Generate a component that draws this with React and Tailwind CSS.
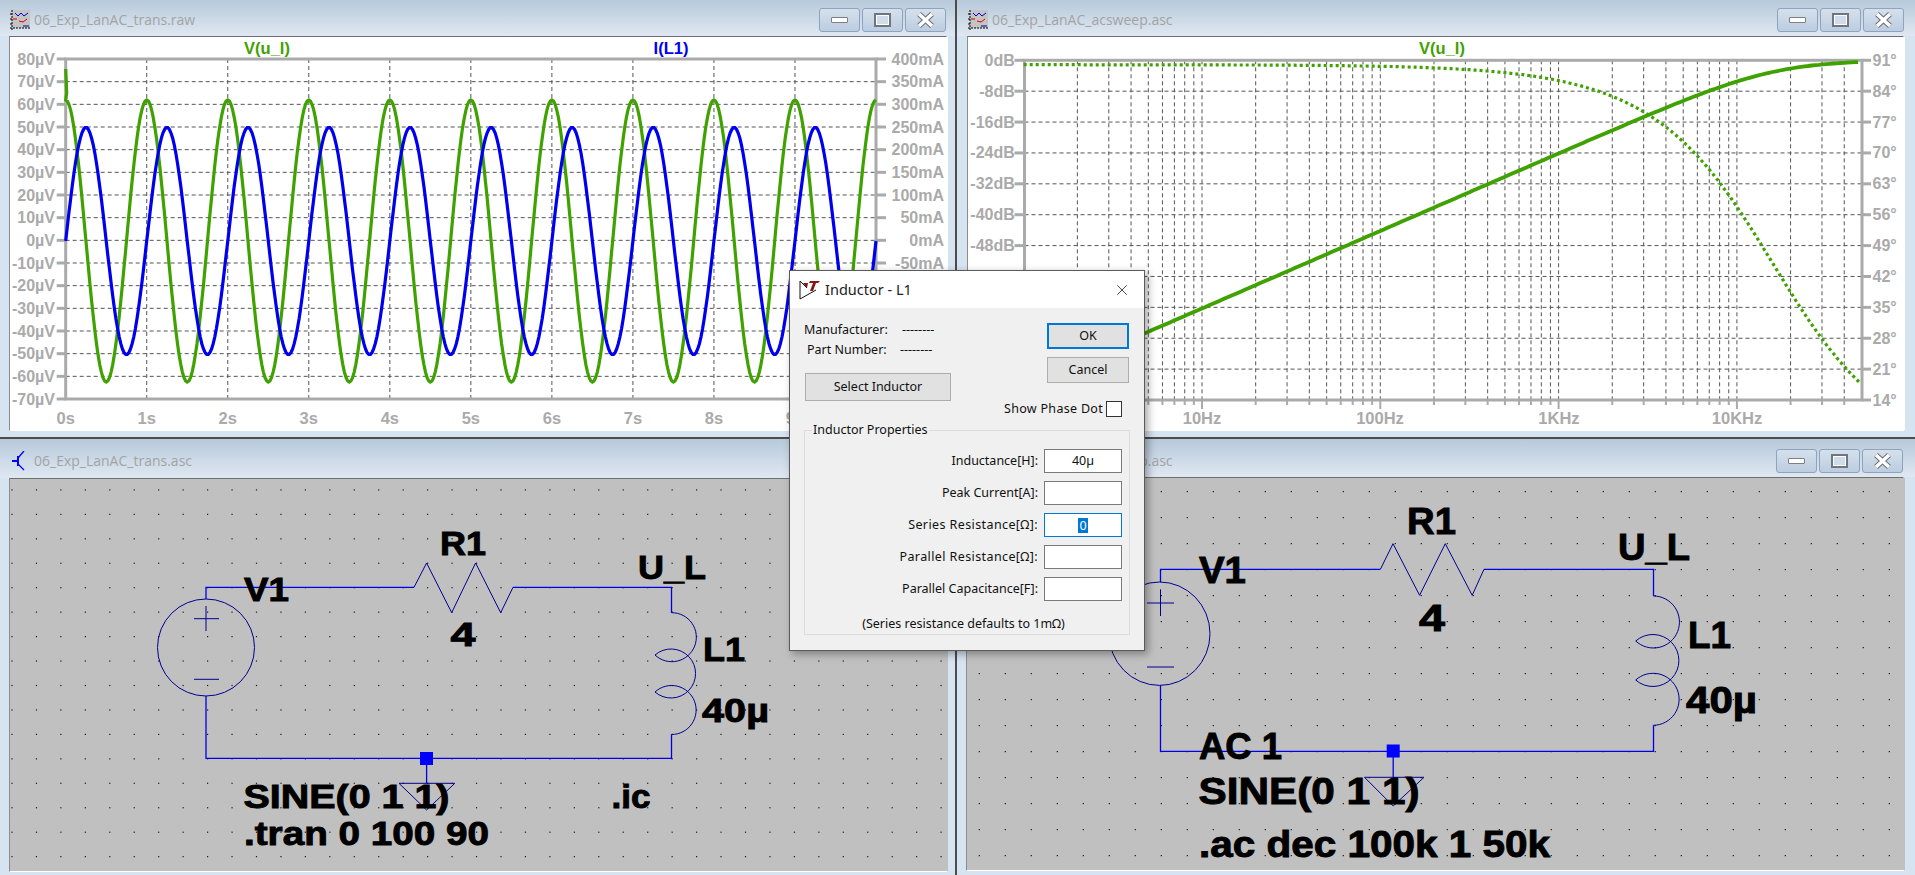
import React from 'react';
import { X } from 'lucide-react';

const GREEN = '#3fa200';
const BLUE = '#0000f0';
const AXIS = '#aaaaaa';
const GRID = '#555555';

function Txt({ x, y, size = 16, anchor = 'start', fill = AXIS, children }) {
  return (
    <text
      x={x}
      y={y}
      textAnchor={anchor}
      fontSize={size}
      fill={fill}
      className="font-['Liberation_Sans'] font-bold"
    >
      {children}
    </text>
  );
}

// schematic text, stretched to the measured width
function Net({ x, y, w, size = 33, children }) {
  return (
    <text
      x={x}
      y={y}
      textLength={w}
      lengthAdjust="spacingAndGlyphs"
      fontSize={size}
      fill="#000"
      stroke="#000"
      strokeWidth="0.9"
      className="font-['Liberation_Sans'] font-bold"
    >
      {children}
    </text>
  );
}

function PlotIcon() {
  return (
    <svg width="20" height="20" viewBox="0 0 20 20" className="shrink-0">
      <rect x="2" y="0" width="18" height="18" fill="#c4c4c4" />
      <path d="M2 0V20M0 4H2M0 9H2M0 14H2M0 18H20" stroke="#000" strokeWidth="1" strokeDasharray="2 1" />
      <path d="M5 3L8 6L11 3L14 6L18 3" stroke="#0000e0" fill="none" strokeWidth="1" />
      <path d="M3 9H7M9 11L13 12L17 9" stroke="#e00000" fill="none" strokeWidth="1" />
      <path d="M13 16H19" stroke="#0000a0" strokeWidth="1" />
    </svg>
  );
}

function SchematicIcon() {
  return (
    <svg width="20" height="20" viewBox="0 0 20 20" className="shrink-0">
      <path d="M2 10H8M8 5V15" stroke="#0000ff" strokeWidth="2" fill="none" />
      <path d="M8 7L14 0M8 13L14 19" stroke="#0000ff" strokeWidth="1.3" fill="none" />
    </svg>
  );
}

function WinButton({ children }) {
  return (
    <div className="w-[41px] h-[24px] flex items-center justify-center rounded-[3px] border border-[#8ea3bf] bg-gradient-to-b from-[#d5e0ec] to-[#bccde0]">
      {children}
    </div>
  );
}

function WinButtons({ className }) {
  return (
    <div className={`flex gap-[2px] ml-auto ${className}`}>
      <WinButton>
        <div className="w-[17px] h-[6px] rounded-[1px] bg-white border border-[#7c7f85]" />
      </WinButton>
      <WinButton>
        <div className="w-[17px] h-[14px] bg-[#cfdcea] border-2 border-[#6f7680] shadow-[inset_0_0_0_1px_white]" />
      </WinButton>
      <WinButton>
        <svg width="19" height="16" viewBox="0 0 19 16">
          <path d="M3 2L16 14M16 2L3 14" stroke="#6b6f76" strokeWidth="5.5" />
          <path d="M3 2L16 14M16 2L3 14" stroke="#ffffff" strokeWidth="3.5" />
        </svg>
      </WinButton>
    </div>
  );
}

function Window({ title, icon, barClass, bodyClass, buttonsClass, frameClass, children }) {
  return (
    <div className={`flex flex-col bg-[#d6e3f0] overflow-hidden ${frameClass}`}>
      <div className={`flex items-center shrink-0 bg-gradient-to-b from-[#b7c9da] to-[#dfe8f2] ${barClass}`}>
        {icon}
        <span className="ml-[4px] text-[14px] text-[#a3a3a3] font-['Open_Sans',sans-serif] leading-none whitespace-nowrap">{title}</span>
        <WinButtons className={buttonsClass} />
      </div>
      <div className={`border-t border-l border-t-[#6e6e6e] border-l-[#8c8c8c] border-r border-b border-r-white border-b-white ${bodyClass}`}>
        {children}
      </div>
    </div>
  );
}

function curve(fn, from, to, step) {
  const pts = [];
  for (let t = from; t <= to + 1e-9; t += step) {
    const [x, y] = fn(t);
    pts.push(`${x.toFixed(1)},${y.toFixed(1)}`);
  }
  return pts.join(' ');
}

function TransPlot() {
  const L = 64.7, R = 875, T = 58, B = 398;
  const dy = (B - T) / 15;
  const dx = (R - L) / 10;
  const rows = Array.from({ length: 16 }, (_, i) => i);
  const cols = Array.from({ length: 11 }, (_, i) => i);
  const green = curve((t) => [L + t * dx, 240 - 141 * Math.cos(2 * Math.PI * t)], 0, 10, 0.02);
  const blue = curve((t) => [L + t * dx, 240 - 113.5 * Math.sin(2 * Math.PI * t)], 0, 10, 0.02);
  return (
    <svg viewBox="9 36 938 393" width="938" height="393" className="block bg-white">
      {rows.slice(1, 15).map((i) => (
        <line key={i} x1={L} x2={R} y1={T + i * dy} y2={T + i * dy} stroke={GRID} strokeDasharray="4 3" />
      ))}
      {cols.slice(1, 10).map((i) => (
        <line key={i} x1={L + i * dx} x2={L + i * dx} y1={T} y2={B} stroke={GRID} strokeDasharray="4 3" />
      ))}
      <rect x={L} y={T} width={R - L} height={B - T} fill="none" stroke={AXIS} strokeWidth="3" />
      {rows.map((i) => (
        <g key={i}>
          <line x1={L - 9} x2={L} y1={T + i * dy} y2={T + i * dy} stroke={AXIS} strokeWidth="3" />
          <line x1={R} x2={R + 10} y1={T + i * dy} y2={T + i * dy} stroke={AXIS} strokeWidth="3" />
          <Txt x={54} y={T + i * dy + 5.5} anchor="end">{80 - i * 10}µV</Txt>
          {i < 10 && <Txt x={943} y={T + i * dy + 5.5} anchor="end">{400 - i * 50}mA</Txt>}
        </g>
      ))}
      {cols.slice(0, 10).map((i) => (
        <Txt key={i} x={L + i * dx} y={423} anchor="middle" size={16.5}>{i}s</Txt>
      ))}
      <Txt x={266} y={52.5} anchor="middle" fill={GREEN} size={16.5}>V(u_l)</Txt>
      <Txt x={670} y={52.5} anchor="middle" fill={BLUE} size={16.5}>I(L1)</Txt>
      <polyline points={`${L},68 ${L + 1},92 ${green}`} fill="none" stroke={GREEN} strokeWidth="3.2" />
      <polyline points={blue} fill="none" stroke={BLUE} strokeWidth="3.2" />
    </svg>
  );
}

function AcPlot() {
  const L = 1023.5, R = 1861, T = 59.3, B = 399;
  const dy = (B - T) / 11;
  const dec = 178.3;
  const x0 = 1022.7;
  const fc = 15900;
  const rows = Array.from({ length: 12 }, (_, i) => i);
  const ticks = [];
  for (let d = 0; d < 5; d++) {
    for (let m = 1; m < 10; m++) {
      const f = m * 10 ** d;
      if (f > 1 && f < 50000) ticks.push({ x: x0 + dec * Math.log10(f), major: m === 1 });
    }
  }
  const fAt = (u) => 10 ** u;
  const mag = curve((u) => {
    const r = fAt(u) / fc;
    const db = 20 * Math.log10(r / Math.sqrt(1 + r * r));
    return [x0 + dec * u, T - db * (31 / 8)];
  }, 0, 4.699, 0.02);
  const phase = curve((u) => {
    const deg = 90 - (Math.atan(fAt(u) / fc) * 180) / Math.PI;
    return [x0 + dec * u, T + (91 - deg) * (340 / 77)];
  }, 0, 4.699, 0.01);
  return (
    <svg viewBox="967 36 937 393" width="937" height="393" className="block bg-white">
      {rows.slice(1, 11).map((i) => (
        <line key={i} x1={L} x2={R} y1={T + i * dy} y2={T + i * dy} stroke={GRID} strokeDasharray="4 3" />
      ))}
      {ticks.map((t) => (
        <g key={t.x}>
          <line x1={t.x} x2={t.x} y1={T} y2={B} stroke={GRID} strokeDasharray="4 3" />
          <line x1={t.x} x2={t.x} y1={B} y2={B + (t.major ? 9 : 5)} stroke={AXIS} strokeWidth="2" />
        </g>
      ))}
      <rect x={L} y={T} width={R - L} height={B - T} fill="none" stroke={AXIS} strokeWidth="3" />
      {rows.map((i) => (
        <g key={i}>
          <line x1={L - 10} x2={L} y1={T + i * dy} y2={T + i * dy} stroke={AXIS} strokeWidth="3" />
          <line x1={R} x2={R + 9} y1={T + i * dy} y2={T + i * dy} stroke={AXIS} strokeWidth="3" />
          {i < 8 && <Txt x={1013.8} y={T + i * dy + 5.5} anchor="end">{i === 0 ? '0' : `-${i * 8}`}dB</Txt>}
          <Txt x={1871.5} y={T + i * dy + 5.5}>{91 - i * 7}°</Txt>
        </g>
      ))}
      <Txt x={1201} y={423} anchor="middle" size={16.5}>10Hz</Txt>
      <Txt x={1379} y={423} anchor="middle" size={16.5}>100Hz</Txt>
      <Txt x={1558} y={423} anchor="middle" size={16.5}>1KHz</Txt>
      <Txt x={1736} y={423} anchor="middle" size={16.5}>10KHz</Txt>
      <Txt x={1441} y={52.5} anchor="middle" fill={GREEN} size={16.5}>V(u_l)</Txt>
      <polyline points={phase} fill="none" stroke={GREEN} strokeWidth="3.2" strokeDasharray="3 3" />
      <polyline points={mag} fill="none" stroke={GREEN} strokeWidth="3.8" />
    </svg>
  );
}

function GridDots({ x0, y0, step, xEnd, yEnd }) {
  const dots = [];
  for (let x = x0; x < xEnd; x += step) {
    for (let y = y0; y < yEnd; y += step) {
      dots.push(<rect key={`${x}-${y}`} x={x} y={y} width="1.2" height="1.2" fill="#1a1a1a" />);
    }
  }
  return <g>{dots}</g>;
}

const WIRE = { stroke: '#0000e6', strokeWidth: 1.3, fill: 'none' };
const SYM = { stroke: '#000090', strokeWidth: 1, fill: 'none' };

function TransSchematic() {
  return (
    <svg viewBox="9 478 938 392" width="938" height="392" className="block bg-[#c0c0c0]">
      <GridDots x0={10.4} y0={488.3} step={24.45} xEnd={947} yEnd={870} />
      <path d="M205 598V586.3H413M512 586.3H670.5V611.7M670.5 733.5V757.3H205V695M425.6 757.3V782.3" {...WIRE} />
      <path d="M413 586.3L425.6 562L450.7 611.7L474.6 562L499.7 611.7L512 586.3" {...SYM} />
      <circle cx="205" cy="646.5" r="48.5" {...SYM} />
      <path d="M193 617.7H218M205 605V630M193 678.3H218" {...SYM} />
      <path d="M670.5 611.7A24.5 24.5 0 1 1 654 654A24.5 24.5 0 1 1 654 691A24.5 24.5 0 1 1 670.5 733.5" {...SYM} />
      <rect x="419" y="751" width="13" height="13" fill="#0000ff" />
      <path d="M398 782.3H453.8L425.6 809Z" {...SYM} />
      <Net x={439} y={554} w={46}>R1</Net>
      <Net x={243} y={600} w={45}>V1</Net>
      <Net x={637} y={578.3} w={68}>U_L</Net>
      <Net x={449.5} y={645} w={25}>4</Net>
      <Net x={702} y={660} w={42}>L1</Net>
      <Net x={701} y={721} w={67}>40µ</Net>
      <Net x={242.5} y={807} w={206}>SINE(0 1 1)</Net>
      <Net x={610.5} y={807} w={39}>.ic</Net>
      <Net x={243} y={844} w={245}>.tran 0 100 90</Net>
    </svg>
  );
}

function AcSchematic() {
  return (
    <svg viewBox="966 477 938 392" width="938" height="392" className="block bg-[#c0c0c0]">
      <GridDots x0={977.7} y0={490} step={26} xEnd={1904} yEnd={869} />
      <path d="M1159.5 581V568.3H1379.4M1483 568.3H1652.5V595M1652.5 724.3V750.3H1159.5V684.3M1392.2 750.3V776.3" {...WIRE} />
      <path d="M1379.4 568.3L1392 542.7L1418.6 594.3L1444.3 542.7L1471.2 594.3L1483 568.3" {...SYM} />
      <ellipse cx="1158.5" cy="632.7" rx="50.5" ry="51.7" {...SYM} />
      <path d="M1146 602H1173M1159.5 588.3V615M1146 666H1173" {...SYM} />
      <path d="M1652.5 595A26 26 0 1 1 1634.7 640A26 26 0 1 1 1634.7 679A26 26 0 1 1 1652.5 724.3" {...SYM} />
      <rect x="1385.7" y="743.5" width="13" height="13" fill="#0000ff" />
      <path d="M1363.5 776.3H1423L1392.2 805Z" {...SYM} />
      <Net x={1406} y={533.3} w={49} size={36}>R1</Net>
      <Net x={1198} y={582.3} w={47} size={36}>V1</Net>
      <Net x={1617} y={559.3} w={72} size={36}>U_L</Net>
      <Net x={1418} y={630} w={26} size={36}>4</Net>
      <Net x={1687} y={647.3} w={43} size={36}>L1</Net>
      <Net x={1685} y={712.3} w={71} size={36}>40µ</Net>
      <Net x={1198} y={758.3} w={83} size={36}>AC 1</Net>
      <Net x={1197.5} y={803.3} w={221} size={36}>SINE(0 1 1)</Net>
      <Net x={1198} y={855.7} w={351} size={36}>.ac dec 100k 1 50k</Net>
    </svg>
  );
}

function DialogButton({ className, children }) {
  return (
    <div className={`flex items-center justify-center bg-[#e1e1e1] border ${className}`}>{children}</div>
  );
}

function Field({ label, value, focused, labelClass = '' }) {
  return (
    <div className="h-[24px] flex items-center justify-end">
      <span className={labelClass}>{label}</span>
      <div className={`ml-[6px] w-[78px] h-[24px] flex items-center justify-center bg-white border ${focused ? 'border-[#0078d7]' : 'border-[#7a7a7a]'}`}>
        {focused ? <span className="bg-[#0078d7] text-white px-[1px] h-[15px] leading-[15px]">{value}</span> : value}
      </div>
    </div>
  );
}

function InductorDialog() {
  return (
    <div className="absolute left-[789px] top-[270px] w-[356px] h-[381px] flex flex-col bg-[#f0f0f0] border border-[#5a5a5a] shadow-[3px_3px_8px_rgba(0,0,0,0.35)] text-[12.5px] leading-none text-[#101010] font-['Noto_Sans',sans-serif]">
      <div className="h-[37px] shrink-0 bg-white flex items-center pl-[9px] pr-[13px]">
        <svg width="21" height="20" viewBox="0 0 21 20">
          <path d="M1 1V19L17 10" fill="none" stroke="#111" strokeWidth="1" />
          <path d="M1 1L8 8" fill="none" stroke="#111" strokeWidth="1" />
          <path d="M4 3H9L8 8M11 1H21L19 3H17L14 11H11L14 3H10Z" fill="#8b1414" />
        </svg>
        <span className="ml-[5px] text-[14.5px] text-[#222]">Inductor - L1</span>
        <X className="ml-auto" size={18} strokeWidth={1} color="#111" />
      </div>
      <div className="h-[122px] shrink-0 flex justify-between pl-[14px] pr-[15px]">
        <div className="w-[147px] pt-[12px]">
          <div className="h-[20px] flex items-center whitespace-nowrap">
            <span className="w-[98px]">Manufacturer:</span>
            <span>--------</span>
          </div>
          <div className="h-[20px] flex items-center whitespace-nowrap">
            <span className="w-[96px] pl-[3px]">Part Number:</span>
            <span>--------</span>
          </div>
          <DialogButton className="mt-[13px] ml-[1px] h-[28px] border-[#adadad]">Select Inductor</DialogButton>
        </div>
        <div className="w-[125px] pt-[15px] flex flex-col items-end">
          <DialogButton className="w-[82px] h-[26px] border-2 border-[#0078d7]">OK</DialogButton>
          <DialogButton className="w-[82px] h-[26px] mt-[8px] border-[#adadad]">Cancel</DialogButton>
          <div className="mt-[18px] pr-[7px] flex items-center whitespace-nowrap">
            <span className="tracking-[0.3px]">Show Phase Dot</span>
            <div className="ml-[3px] w-[16px] h-[16px] bg-white border border-[#333]" />
          </div>
        </div>
      </div>
      <div className="relative mx-[14px] h-[205px] border border-[#dcdcdc] pt-[18px] pr-[7px] flex flex-col gap-[8px]">
        <span className="absolute -top-[7px] left-[7px] px-[1px] bg-[#f0f0f0]">Inductor Properties</span>
        <Field label="Inductance[H]:" value="40µ" />
        <Field label="Peak Current[A]:" />
        <Field label="Series Resistance[Ω]:" value="0" focused labelClass="tracking-[0.4px]" />
        <Field label="Parallel Resistance[Ω]:" labelClass="tracking-[0.4px]" />
        <Field label="Parallel Capacitance[F]:" />
        <p className="mt-[5px] h-[20px] flex items-center justify-center">(Series resistance defaults to 1mΩ)</p>
      </div>
    </div>
  );
}

export default function App() {
  return (
    <div className="relative w-[1915px] h-[875px] overflow-hidden grid grid-cols-[955px_960px] grid-rows-[439px_436px]">
      <Window
        title="06_Exp_LanAC_trans.raw"
        icon={<PlotIcon />}
        frameClass="border-b-2 border-b-[#4c4c4c]"
        barClass="h-[36px] pt-[4px] pl-[10px]"
        bodyClass="ml-[9px] w-[938px]"
        buttonsClass="mr-[9px]"
      >
        <TransPlot />
      </Window>
      <Window
        title="06_Exp_LanAC_acsweep.asc"
        icon={<PlotIcon />}
        frameClass="border-l-2 border-l-[#4c4c4c] border-b-2 border-b-[#4c4c4c]"
        barClass="h-[36px] pt-[4px] pl-[11px]"
        bodyClass="ml-[10px] w-[937px]"
        buttonsClass="mr-[11px]"
      >
        <AcPlot />
      </Window>
      <Window
        title="06_Exp_LanAC_trans.asc"
        icon={<SchematicIcon />}
        barClass="h-[39px] pt-[5px] pl-[10px]"
        bodyClass="ml-[9px] w-[938px]"
        buttonsClass="mr-[9px]"
      >
        <TransSchematic />
      </Window>
      <Window
        title="06_Exp_LanAC_acsweep.asc"
        icon={<SchematicIcon />}
        frameClass="border-l-2 border-l-[#4c4c4c]"
        barClass="h-[38px] pt-[5px] pl-[11px]"
        bodyClass="ml-[9px] w-[938px]"
        buttonsClass="mr-[12px]"
      >
        <AcSchematic />
      </Window>
      <InductorDialog />
    </div>
  );
}
